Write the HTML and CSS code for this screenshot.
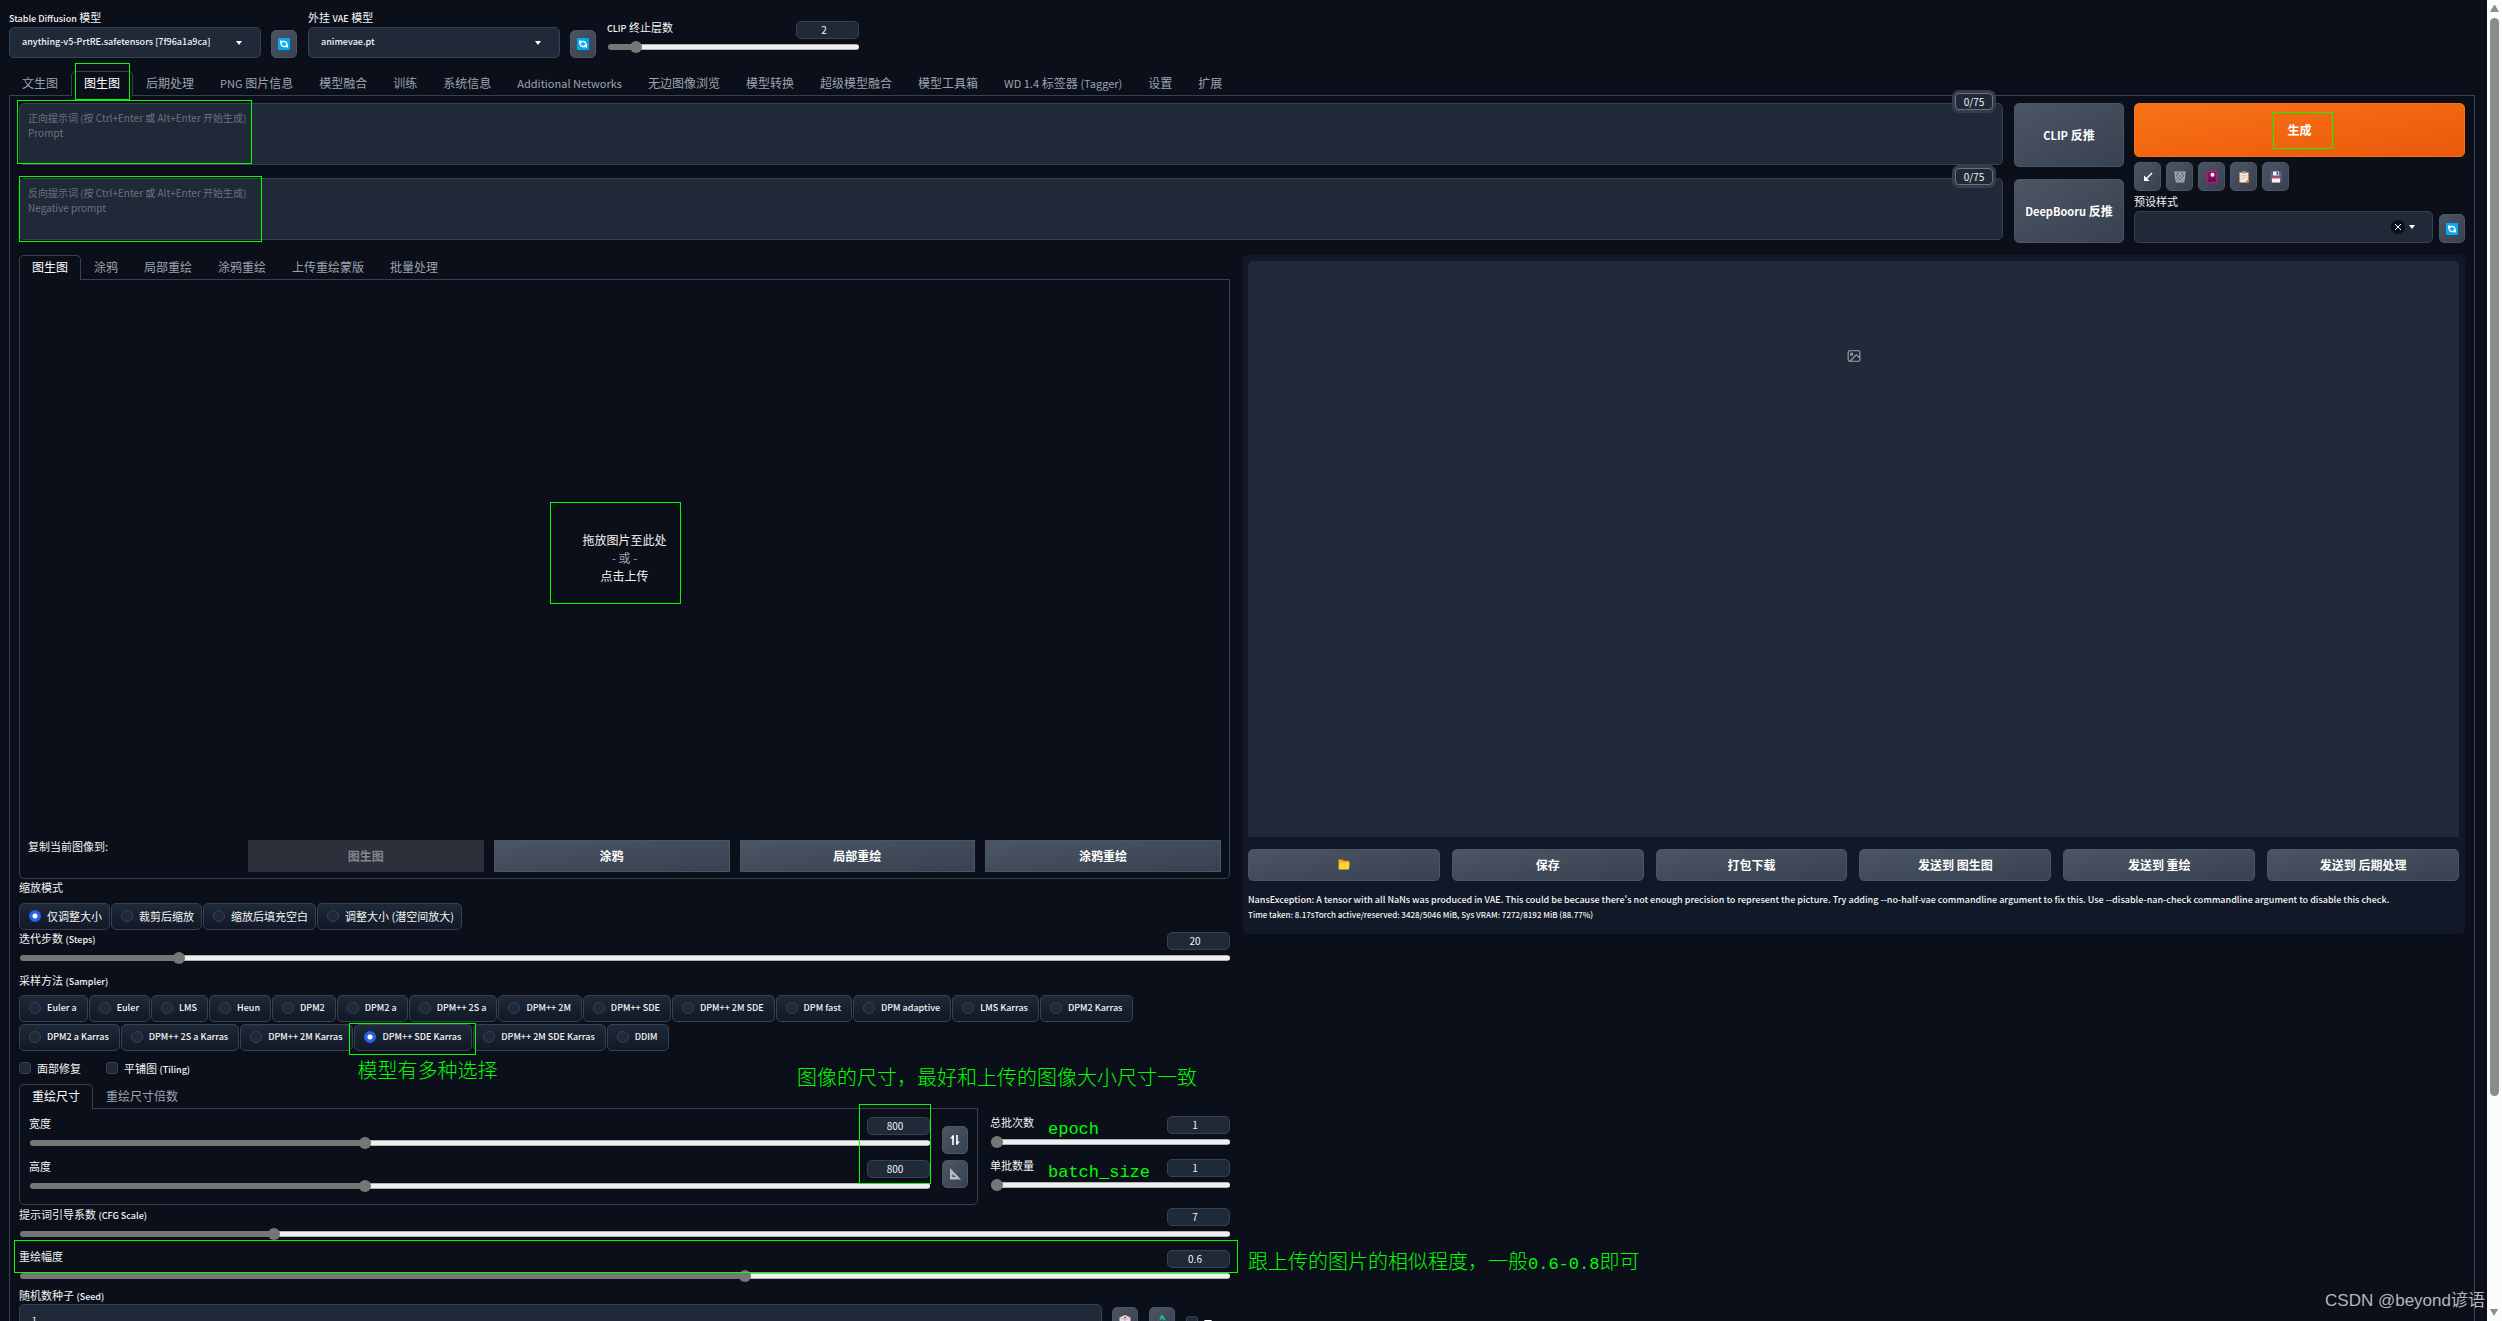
FILE: index.html
```html
<!DOCTYPE html>
<html lang="zh-CN">
<head>
<meta charset="utf-8">
<title>Stable Diffusion</title>
<link rel="stylesheet" href="styles.css">
</head>
<body>
<svg class="sprite" aria-hidden="true">
  <symbol id="i-refresh" viewBox="0 0 12 12"><rect width="12" height="12" rx="1" fill="#03a9f4"/><path d="M3 6.500V3.500h3.200c1.500 0 2.300.7 2.500 1.800M9 5.500v3H5.800C4.300 8.500 3.500 7.800 3.300 6.700" fill="none" stroke="#fff" stroke-width="1.400"/><path d="M2 2v3.200h3.200zM10 10V6.800H6.800z" fill="#fff"/></symbol>
  <symbol id="i-arrow" viewBox="0 0 12 12"><path d="M10 2 3.500 8.500" fill="none" stroke="#fff" stroke-width="1.500"/><path d="M2 4.500V10h5.500z" fill="#fff"/></symbol>
  <symbol id="i-trash" viewBox="0 0 12 12"><path d="M.5 1h11M1 1l1.200 10h7.600L11 1" fill="#6b6f76" stroke="#b4b7bb"/><path d="m2 2 7 8M5 2l5 6M2 6l4 4.500M10 2 3 10M7 2 2 7M10.500 6 6 10.500" stroke="#c9cbce" stroke-width=".7"/></symbol>
  <symbol id="i-card" viewBox="0 0 12 12"><rect x="1.500" y=".5" width="9" height="11" rx=".8" fill="#7a1459" stroke="#e3008c" stroke-width="1.300"/><circle cx="6.500" cy="3.800" r="2" fill="#fff"/><path d="M2 11V8.500l4-2 4 2V11z" fill="#5b1650"/></symbol>
  <symbol id="i-clip" viewBox="0 0 12 12"><rect x="1" y="1" width="10" height="11" rx="1" fill="#d08a3f"/><path d="M2.200 2h7.600v6.500L7.500 11H2.200z" fill="#f3f0f5"/><path d="M4 .2h4V2.500H4z" fill="#9a9aa5"/><path d="M3.500 4.500h5M3.500 6.300h5M3.500 8.200h3" stroke="#b3aebc" stroke-width=".7"/></symbol>
  <symbol id="i-save" viewBox="0 0 12 12"><path d="M.5.500h9.800l1.200 1.200v9.800H.5z" fill="#6b5a8e"/><path d="M3 .5h6v4H3z" fill="#f4f4f6"/><path d="M6.600 1h1.600v2.800H6.600z" fill="#41365c"/><path d="M2 6.500h8v5H2z" fill="#f4f4f6"/><path d="M2 6h8v1.500H2z" fill="#e0404f"/></symbol>
  <symbol id="i-folder" viewBox="0 0 12 12"><path d="M.5 1.500h4l1.200 1.200h5.300V11H.5z" fill="#f5a623"/><path d="M1.500 4.500h10.200L11 11.500H.8z" fill="#ffd33d"/></symbol>
  <symbol id="i-swap" viewBox="0 0 12 12"><path d="M4 11V3M8 1v8" fill="none" stroke="#fff" stroke-width="1.600"/><path d="M1.200 4.500 4 .8l1 1.200v2.500zM10.800 7.500 8 11.200 7 10V7.500z" fill="#fff"/></symbol>
  <symbol id="i-ruler" viewBox="0 0 12 12"><path d="M1 0v11.500h11zM3.500 6v3h3.200z" fill="#bdb8c4" fill-rule="evenodd"/></symbol>
  <symbol id="i-dice" viewBox="0 0 12 12"><path d="M6 0 11.500 2.500V9L6 12 .5 9V2.500z" fill="#e7e0e6"/><path d="M.5 2.500 6 5v7M11.500 2.500 6 5" fill="none" stroke="#a8a0ac" stroke-width=".7"/><circle cx="6" cy="2.500" r="1.100" fill="#d13438"/><circle cx="3" cy="7" r="1" fill="#444"/><circle cx="9" cy="7" r="1" fill="#444"/></symbol>
  <symbol id="i-recycle" viewBox="0 0 12 12"><path d="M4 4.500 6 1l2.500 4M9.500 6l1.500 3.500H7M5 9.500H1L3 6" fill="none" stroke="#16c47f" stroke-width="2"/></symbol>
  <symbol id="i-image" viewBox="0 0 24 24"><g fill="none" stroke="#9ca3af" stroke-width="2"><rect x="2" y="3" width="20" height="18" rx="2"/><circle cx="8" cy="9" r="2"/><path d="m22 15-6-5L5 21"/></g></symbol>
</svg>

<div class="window">
<main class="app">
  <header class="quick">
    <div class="model">
      <div class="picker">
        <label for="sd-model"><span class="en">Stable Diffusion</span> 模型</label>
        <div class="select"><select id="sd-model"><option>anything-v5-PrtRE.safetensors [7f96a1a9ca]</option></select></div>
      </div>
      <button class="tool" aria-label="刷新"><svg><use href="#i-refresh"/></svg></button>
    </div>
    <div class="model">
      <div class="picker">
        <label for="vae">外挂 <span class="en">VAE</span> 模型</label>
        <div class="select"><select id="vae"><option>animevae.pt</option></select></div>
      </div>
      <button class="tool" aria-label="刷新"><svg><use href="#i-refresh"/></svg></button>
    </div>
    <div class="slider clip-skip">
      <label for="clip-skip"><span class="en">CLIP</span> 终止层数</label><input class="num" value="2" aria-label="CLIP 终止层数">
      <input class="range" id="clip-skip" type="range" min="1" max="12" value="2" style="--at:0.0909">
    </div>
  </header>

  <nav class="tabs main-tabs">
    <button>文生图</button>
    <button class="on">图生图<span class="mark mark-tab"></span></button>
    <button>后期处理</button>
    <button><span class="en">PNG</span> 图片信息</button>
    <button>模型融合</button>
    <button>训练</button>
    <button>系统信息</button>
    <button><span class="en">Additional Networks</span></button>
    <button>无边图像浏览</button>
    <button>模型转换</button>
    <button>超级模型融合</button>
    <button>模型工具箱</button>
    <button><span class="en">WD 1.4</span> 标签器 <span class="en">(Tagger)</span></button>
    <button>设置</button>
    <button>扩展</button>
  </nav>

  <section class="page">
    <div class="top">
      <div class="prompts">
        <div class="prompt">
          <textarea aria-label="正向提示词" placeholder="正向提示词 (按 Ctrl+Enter 或 Alt+Enter 开始生成)&#10;Prompt"></textarea>
          <span class="count">0/75</span><span class="mark mark-prompt"></span>
        </div>
        <div class="prompt">
          <textarea aria-label="反向提示词" placeholder="反向提示词 (按 Ctrl+Enter 或 Alt+Enter 开始生成)&#10;Negative prompt"></textarea>
          <span class="count">0/75</span><span class="mark mark-negative"></span>
        </div>
      </div>
      <div class="interrogate">
        <button class="btn"><span class="en">CLIP</span> 反推</button>
        <button class="btn"><span class="en">DeepBooru</span> 反推</button>
      </div>
      <div class="actions">
        <button class="btn generate">生成<span class="mark mark-generate"></span></button>
        <div class="tools">
          <button class="tool" aria-label="读取参数"><svg><use href="#i-arrow"/></svg></button>
          <button class="tool" aria-label="清空"><svg><use href="#i-trash"/></svg></button>
          <button class="tool" aria-label="附加网络"><svg><use href="#i-card"/></svg></button>
          <button class="tool" aria-label="应用样式"><svg><use href="#i-clip"/></svg></button>
          <button class="tool" aria-label="保存样式"><svg><use href="#i-save"/></svg></button>
        </div>
        <div class="styles-row">
          <div class="picker">
            <label for="styles">预设样式</label>
            <div class="select inset"><select id="styles"><option></option></select><button class="clear" aria-label="清除"><svg viewBox="0 0 8 8"><path d="m1 1 6 6M7 1 1 7"/></svg></button></div>
          </div>
          <button class="tool" aria-label="刷新"><svg><use href="#i-refresh"/></svg></button>
        </div>
      </div>
    </div>

    <div class="columns">
      <div class="settings">
        <nav class="tabs">
          <button class="on">图生图</button><button>涂鸦</button><button>局部重绘</button><button>涂鸦重绘</button><button>上传重绘蒙版</button><button>批量处理</button>
        </nav>
        <div class="panel source">
          <div class="drop">拖放图片至此处<span class="or">- 或 -</span>点击上传<span class="mark mark-drop"></span></div>
          <div class="copy">
            <span class="copy-label">复制当前图像到:</span>
            <button class="btn flat" disabled>图生图</button>
            <button class="btn flat">涂鸦</button>
            <button class="btn flat">局部重绘</button>
            <button class="btn flat">涂鸦重绘</button>
          </div>
        </div>

        <fieldset class="choices resize">
          <legend>缩放模式</legend>
          <div class="chips">
            <label><input type="radio" name="resize" checked>仅调整大小</label>
            <label><input type="radio" name="resize">裁剪后缩放</label>
            <label><input type="radio" name="resize">缩放后填充空白</label>
            <label><input type="radio" name="resize">调整大小 (潜空间放大)</label>
          </div>
        </fieldset>

        <div class="slider">
          <label for="steps">迭代步数 <span class="en">(Steps)</span></label><input class="num" value="20" aria-label="迭代步数">
          <input class="range" id="steps" type="range" min="1" max="150" value="20" style="--at:0.1275">
        </div>

        <fieldset class="choices sampler">
          <legend>采样方法 <span class="en">(Sampler)</span></legend>
          <div class="chips">
            <label><input type="radio" name="sampler">Euler a</label>
            <label><input type="radio" name="sampler">Euler</label>
            <label><input type="radio" name="sampler">LMS</label>
            <label><input type="radio" name="sampler">Heun</label>
            <label><input type="radio" name="sampler">DPM2</label>
            <label><input type="radio" name="sampler">DPM2 a</label>
            <label><input type="radio" name="sampler">DPM++ 2S a</label>
            <label><input type="radio" name="sampler">DPM++ 2M</label>
            <label><input type="radio" name="sampler">DPM++ SDE</label>
            <label><input type="radio" name="sampler">DPM++ 2M SDE</label>
            <label><input type="radio" name="sampler">DPM fast</label>
            <label><input type="radio" name="sampler">DPM adaptive</label>
            <label><input type="radio" name="sampler">LMS Karras</label>
            <label><input type="radio" name="sampler">DPM2 Karras</label>
          </div>
          <div class="chips">
            <label><input type="radio" name="sampler">DPM2 a Karras</label>
            <label><input type="radio" name="sampler">DPM++ 2S a Karras</label>
            <label><input type="radio" name="sampler">DPM++ 2M Karras</label>
            <label><input type="radio" name="sampler" checked>DPM++ SDE Karras<span class="mark mark-sampler"></span><span class="note note-sampler">模型有多种选择</span></label>
            <label><input type="radio" name="sampler">DPM++ 2M SDE Karras</label>
            <label><input type="radio" name="sampler">DDIM</label>
          </div>
        </fieldset>

        <div class="checks">
          <label><input type="checkbox">面部修复</label>
          <label><input type="checkbox"><span>平铺图 <span class="en">(Tiling)</span></span></label>
        </div>

        <div class="size-row">
          <div class="size">
            <nav class="tabs"><button class="on">重绘尺寸</button><button>重绘尺寸倍数</button></nav>
            <div class="panel size-panel">
              <div class="stack">
                <div class="slider">
                  <label for="width">宽度</label><input class="num" value="800" aria-label="宽度">
                  <input class="range" id="width" type="range" min="64" max="2048" value="800" style="--at:0.371">
                </div>
                <div class="slider">
                  <label for="height">高度</label><input class="num" value="800" aria-label="高度">
                  <input class="range" id="height" type="range" min="64" max="2048" value="800" style="--at:0.371">
                </div>
                <span class="mark mark-size"></span>
              </div>
              <div class="size-tools">
                <button class="tool" aria-label="交换宽高"><svg><use href="#i-swap"/></svg></button>
                <button class="tool" aria-label="从图像读取尺寸"><svg><use href="#i-ruler"/></svg></button>
              </div>
            </div>
            <span class="note note-size">图像的尺寸，最好和上传的图像大小尺寸一致</span>
          </div>
          <div class="stack batch">
            <div class="slider">
              <label for="batch-count">总批次数</label><input class="num" value="1" aria-label="总批次数">
              <input class="range" id="batch-count" type="range" min="1" max="100" value="1" style="--at:0">
              <span class="note latin note-batch">epoch</span>
            </div>
            <div class="slider">
              <label for="batch-size">单批数量</label><input class="num" value="1" aria-label="单批数量">
              <input class="range" id="batch-size" type="range" min="1" max="8" value="1" style="--at:0">
              <span class="note latin note-batch">batch_size</span>
            </div>
          </div>
        </div>

        <div class="slider cfg">
          <label for="cfg">提示词引导系数 <span class="en">(CFG Scale)</span></label><input class="num" value="7" aria-label="提示词引导系数">
          <input class="range" id="cfg" type="range" min="1" max="30" value="7" style="--at:0.2069">
        </div>
        <div class="slider denoise">
          <label for="denoise">重绘幅度</label><input class="num" value="0.6" aria-label="重绘幅度">
          <input class="range" id="denoise" type="range" min="0" max="1" step="0.01" value="0.6" style="--at:0.6">
          <span class="mark mark-denoise"></span>
          <span class="note note-denoise">跟上传的图片的相似程度，一般<span class="latin">0.6-0.8</span>即可</span>
        </div>
        <div class="seed">
          <div class="picker">
            <label for="seed">随机数种子 <span class="en">(Seed)</span></label>
            <input class="text" id="seed" value="-1">
          </div>
          <button class="tool" aria-label="随机"><svg><use href="#i-dice"/></svg></button>
          <button class="tool" aria-label="复用"><svg><use href="#i-recycle"/></svg></button>
          <label class="extra"><input type="checkbox" aria-label="额外选项"><span class="caret"></span></label>
        </div>
      </div>

      <div class="results">
        <div class="output">
          <div class="gallery"><svg><use href="#i-image"/></svg></div>
          <div class="send">
            <button class="btn" aria-label="打开目录"><svg><use href="#i-folder"/></svg></button>
            <button class="btn">保存</button>
            <button class="btn">打包下载</button>
            <button class="btn">发送到 图生图</button>
            <button class="btn">发送到 重绘</button>
            <button class="btn">发送到 后期处理</button>
          </div>
          <div class="log">
            <p>NansException: A tensor with all NaNs was produced in VAE. This could be because there's not enough precision to represent the picture. Try adding --no-half-vae commandline argument to fix this. Use --disable-nan-check commandline argument to disable this check.</p>
            <p class="perf">Time taken: 8.17sTorch active/reserved: 3428/5046 MiB, Sys VRAM: 7272/8192 MiB (88.77%)</p>
          </div>
        </div>
      </div>
    </div>
  </section>
</main>
<aside class="scrollbar" aria-hidden="true"><span class="up"></span><span class="thumb"></span><span class="down"></span></aside>
<span class="watermark">CSDN @beyond谚语</span>
</div>
</body>
</html>
```
FILE: styles.css
```css
:root {
  --bg: #0b0f19;
  --line: #374151;
  --field: #1f2937;
  --text: #f3f4f6;
  --muted: #9ca3af;
  --mark: #00ff00;
}
* { box-sizing: border-box; }
body {
  margin: 0;
  background: var(--bg);
  color: var(--text);
  font: 11px/16px "Noto Sans CJK SC", sans-serif;
}
button, input, select, textarea { font: inherit; color: inherit; margin: 0; }
button { padding: 0; }
p { margin: 0; }
.en { font-size: 9px; line-height: 1; font-weight: 500; }
.tabs .en, .btn .en { font-size: 11px; font-weight: inherit; }
.sprite { position: absolute; width: 0; height: 0; }
.window { display: flex; height: 100vh; overflow: hidden; position: relative; }
.app { flex: 1; min-width: 0; padding: 10px 12px 0 9px; }

/* quick settings */
.quick { display: flex; align-items: flex-start; gap: 11px; height: 61px; }
.model { display: flex; align-items: flex-end; gap: 10px; }
.model .picker { width: 252px; }
.picker > label { display: block; height: 17px; line-height: 15px; }
.select { position: relative; display: flex; }
.select select {
  appearance: none; width: 100%; height: 31px; padding: 0 12px 2px; font-size: 9px; font-weight: 500;
  background: var(--field); border: 1px solid var(--line); border-radius: 5px;
}
.select::after {
  content: ""; position: absolute; right: 19px; top: 14px;
  border: 3px solid transparent; border-top: 4px solid #fff; border-bottom: 0;
}
.select.inset select { height: 32px; }
.select.inset::after { right: 18px; }
.clear {
  position: absolute; right: 28px; top: 9px; width: 14px; height: 14px;
  border: 0; border-radius: 50%; background: var(--bg); display: grid; place-items: center;
}
.clear svg { width: 8px; height: 8px; stroke: #fff; fill: none; }
.tool {
  flex: none; width: 26px; height: 28px; display: grid; place-items: center;
  background: linear-gradient(to bottom right, #4b5563, #374151);
  border: 1px solid #4b5563; border-radius: 5px;
}
.tool svg, .btn svg { width: 12px; height: 12px; }

/* sliders */
.slider {
  display: grid; grid-template-columns: 1fr auto; grid-template-rows: 18px 12px; row-gap: 2px;
  position: relative;
}
.slider > label { line-height: 12px; }
.clip-skip { width: 252px; margin-top: 11px; }
.num {
  width: 63px; height: 18px; padding: 0 7px 1px 0; text-align: center; font-size: 10px;
  background: var(--field); border: 1px solid var(--line); border-radius: 5px;
}
.range {
  appearance: none; grid-column: 1 / -1; width: calc(100% - 1px); height: 12px; margin-left: 1px;
  background: none; --fill: calc(6px + (100% - 12px) * var(--at));
}
.range::-webkit-slider-runnable-track {
  height: 6px; border-radius: 3px;
  background:
    linear-gradient(#767676, #767676) 0 0 / var(--fill) 100% no-repeat,
    linear-gradient(#b2b2b2 1px, #efefef 1px, #efefef 5px, #b2b2b2 5px);
}
.range::-webkit-slider-thumb {
  appearance: none; width: 12px; height: 12px; margin-top: -3px;
  border-radius: 50%; background: #767676;
}

/* tabs */
.tabs { display: flex; height: 24px; }
.tabs button {
  position: relative; height: 25px; padding: 0 12px 3px; font-size: 12px; line-height: 20px;
  color: var(--muted); background: none; border: 1px solid transparent; border-bottom: 0;
  border-radius: 5px 5px 0 0; white-space: nowrap;
}
.tabs .on { color: #fff; background: var(--bg); border-color: var(--line); z-index: 1; }
.page { border: 1px solid var(--line); border-bottom: 0; padding: 7px 9px 0; }

/* prompt area */
.top { display: flex; height: 152px; }
.prompts { flex: 1; display: grid; grid-auto-rows: 62px; gap: 13px; align-content: start; }
.prompt { position: relative; display: flex; }
.prompt textarea {
  flex: 1; resize: none; padding: 6px 8px; font-size: 10px; line-height: 15px;
  background: var(--field); border: 1px solid var(--line); border-radius: 5px;
}
.prompt textarea::placeholder { color: #6b7280; }
.count {
  position: absolute; right: 10px; top: -10px; width: 38px; height: 17px; line-height: 15px;
  text-align: center; font-size: 10px; background: var(--field); border: 1px solid #6b7280; border-radius: 4px;
  box-shadow: 0 0 0 3px #373d48;
}
.btn {
  position: relative; height: 32px; font-size: 12px; font-weight: 700; color: #fff;
  background: linear-gradient(to bottom right, #4b5563, #374151);
  border: 1px solid #4b5563; border-radius: 5px;
}
.btn.flat { border-radius: 0; }
.btn:disabled { color: #85878c; background: #2b303a; border-color: #2b303a; }
.interrogate { width: 110px; margin: 0 10px 0 11px; display: grid; grid-auto-rows: 64px; gap: 12px; align-content: start; }
.interrogate .btn { height: auto; }
.actions { width: 331px; }
.generate {
  display: block; width: 100%; height: 54px;
  background: linear-gradient(to bottom right, #f97316, #ea580c); border-color: #f97316;
}
.tools { display: flex; gap: 5px; margin: 5px 0 3px; }
.tools .tool { width: 27px; height: 29px; }
.styles-row { display: flex; align-items: flex-end; gap: 6px; }
.styles-row .picker { flex: 1; }
.styles-row .tool { height: 29px; }

/* two columns */
.columns { display: grid; grid-template-columns: 1211fr 1222fr; gap: 13px; align-items: start; }
.panel { border: 1px solid var(--line); border-radius: 0 0 5px 5px; }
.source { height: 600px; padding: 0 8px 6px; display: flex; flex-direction: column; }
.drop {
  position: relative; flex: 1; display: flex; flex-direction: column; align-items: center;
  justify-content: center; font-size: 12px; line-height: 18px; padding-bottom: 4px;
}
.or { color: var(--muted); }
.copy { display: grid; grid-template-columns: 210px repeat(4, 1fr); gap: 10px; }
.copy-label { line-height: 12px; }

.choices { border: 0; margin: 0; padding: 0; min-width: 0; }
.choices legend { padding: 0; line-height: 14px; height: 14px; }
.resize { margin: 1px 0 2px; }
.resize .chips { margin-top: 9px; }
.resize .chips label { padding-right: 7px; }
.sampler { margin-top: 9px; }
.sampler .chips { margin-bottom: 2px; }
.sampler .chips label { font-size: 9px; font-weight: 500; padding-right: 10px; }
.sampler legend { margin-bottom: 8px; }
.chips { display: flex; gap: 1px; }
.chips label {
  position: relative; display: flex; align-items: center; gap: 6px; height: 27px; padding: 0 9px 1px;
  background: linear-gradient(#1f2937, #111827); border: 1px solid var(--line); border-radius: 5px;
  white-space: nowrap;
}
.chips input, .checks input, .extra input {
  appearance: none; width: 12px; height: 12px; background: var(--field);
  border: 1px solid var(--line); border-radius: 50%;
}
.chips input:checked { background: radial-gradient(circle, #fff 2px, #2563eb 3px); border-color: #2563eb; }
.checks { display: flex; gap: 25px; height: 16px; margin: 7px 0 8px; }
.checks label, .extra { display: flex; align-items: center; gap: 6px; }
.checks input, .extra input { border-radius: 3px; }

.size-row { display: grid; grid-template-columns: 959fr 240fr; gap: 12px; }
.size { position: relative; }
.size-panel { display: flex; gap: 12px; padding: 8px 9px 12px; }
.stack { position: relative; flex: 1; display: grid; grid-auto-rows: 32px; gap: 11px; }
.batch { padding-top: 32px; }
.size-tools { display: grid; gap: 6px; padding-top: 9px; height: 71px; }
.cfg { margin: 3px 0 10px; }
.seed { display: flex; align-items: flex-start; margin-top: 6px; }
.seed .picker { flex: 1; margin-right: 10px; }
.seed .picker > label { height: 16px; }
.seed .tool { margin: 19px 11px 0 0; }
.extra { margin: 28px 0 0; width: 44px; }
.caret { border: 4px solid transparent; border-top: 5px solid #fff; border-bottom: 0; }
.text {
  display: block; width: 100%; height: 32px; padding: 0 8px; font-size: 10px;
  background: var(--field); border: 1px solid var(--line); border-radius: 5px;
}

/* output */
.output { padding: 6px 6px 12px 5px; background: #111827; border-radius: 5px; }
.gallery { height: 576px; background: var(--field); border-radius: 5px 5px 0 0; display: flex; justify-content: center; padding-top: 88px; }
.gallery svg { width: 14px; height: 14px; }
.send { display: grid; grid-template-columns: repeat(6, 1fr); gap: 12px; margin: 12px 0 11px; }
.log { font-size: 9px; font-weight: 500; line-height: 15px; }
.perf { font-size: 8px; }

/* hand-drawn marks and notes */
.mark { position: absolute; border: 1px solid var(--mark); pointer-events: none; z-index: 2; }
.mark-tab { inset: -9px 2px -4px 3px; }
.mark-prompt { left: -2px; top: -3px; width: 235px; height: 64px; }
.mark-negative { left: 0; top: -2px; width: 243px; height: 66px; }
.mark-generate { left: 50%; top: 8px; width: 60px; height: 37px; margin-left: -27px; }
.mark-drop { left: 50%; top: 50%; width: 131px; height: 102px; margin: -58px 0 0 -75px; }
.mark-sampler { inset: -2px -5px -5px -6px; }
.mark-size { right: -1px; top: -13px; width: 72px; height: 80px; }
.mark-denoise { inset: -10px -8px 9px -5px; }
.note {
  position: absolute; color: var(--mark); font-size: 20px; line-height: 24px; font-weight: 300;
  white-space: nowrap; pointer-events: none; z-index: 2;
}
.latin { font-family: "Liberation Mono", monospace; font-size: 17px; font-weight: 400; }
.note-sampler { left: 2px; top: 33px; }
.note-size { right: -219px; top: -19px; }
.note-batch { left: 58px; top: 2px; }
.note-denoise { left: calc(100% + 18px); top: -1px; }

.scrollbar { width: 15px; background: #fcfcfc; display: flex; flex-direction: column; align-items: center; padding: 5px 0; gap: 6px; }
.scrollbar .thumb { width: 9px; flex: 1077; background: #8b8b8b; border-radius: 5px; }
.scrollbar .down { flex: 214; }
.up, .down { width: 9px; }
.up::before, .down::after { content: ""; display: block; border: 4px solid transparent; }
.up::before { border-bottom: 7px solid #8b8b8b; border-top: 0; }
.down { display: flex; align-items: flex-end; }
.down::after { border-top: 7px solid #8b8b8b; border-bottom: 0; }
.watermark {
  position: absolute; right: 17px; bottom: 8px; color: #b4b6ba;
  font: 17px/24px "Liberation Sans", "Noto Sans CJK SC", sans-serif;
}
```
